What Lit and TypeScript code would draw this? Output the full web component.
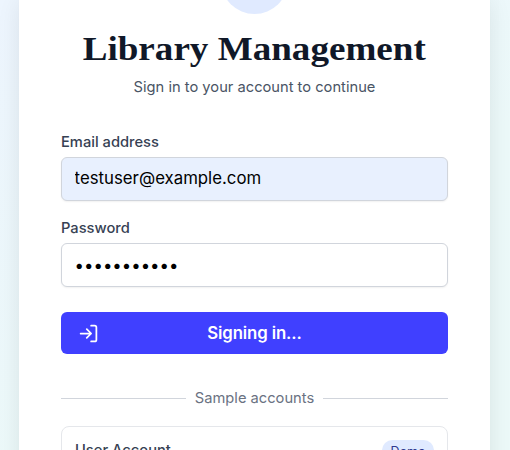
import { LitElement, html, css } from "lit";
import { customElement } from "lit/decorators.js";

@customElement("app-root")
export class AppRoot extends LitElement {
  static styles = css`
    :host {
      display: block;
      height: 450px;
      overflow: hidden;
      font-family: Inter, "Liberation Sans", sans-serif;
      font-size: 14.7px;
      line-height: 21px;
      color: #364153;
      background: linear-gradient(145deg, #edf5fe 0%, #ecf9f9 60%, #ecf9f8 100%);
    }
    * { box-sizing: border-box; }
    .card {
      width: 471px;
      height: 560px;
      margin-left: 19px;
      padding: 0 42px;
      background: #fff;
      box-shadow: 0 0 24px -2px rgba(0, 0, 0, 0.09), 0 -30px 24px -2px rgba(0, 0, 0, 0.02);
    }
    .head { display: flex; flex-direction: column; align-items: center; }
    .logo {
      width: 67px;
      height: 67px;
      margin-top: -53px;
      border-radius: 50%;
      background: #e0eaff;
    }
    h1 {
      margin: 16px 0 0;
      font: bold 34px/38px "Liberation Serif", serif;
      transform: scaleX(1.091);
      white-space: nowrap;
      color: #101828;
    }
    .sub { margin: 9px 0 0; color: #4a5565; }
    .form { display: flex; flex-direction: column; margin-top: 34px; }
    label { height: 21px; font-weight: 500; margin-bottom: 4px; }
    .field {
      display: block;
      width: 100%;
      height: 44px;
      border: 1px solid #d1d5dc;
      border-radius: 6px;
      padding: 0 12.6px;
      margin: 0 0 17px;
      outline: 0;
      background: #fff;
      font-family: inherit;
      font-size: 16.8px;
      color: #000;
      box-shadow: 0 1px 2px rgba(0, 0, 0, 0.06);
    }
    .filled { background: #e8f0fe; padding-bottom: 2px; }
    button {
      display: grid;
      grid-template-columns: 21px 1fr 21px;
      align-items: center;
      height: 42px;
      margin: 8px 0 0;
      padding: 0 17px;
      border: 0;
      border-radius: 6px;
      background: #4040ff;
      color: #fff;
      font: 600 16.8px/25px Inter, sans-serif;
      letter-spacing: -0.12px;
    }
    svg { display: block; }
    .divider {
      display: flex;
      align-items: center;
      gap: 9px;
      margin-top: 34px;
      height: 21px;
      color: #6a7282;
    }
    .line { flex: 1; height: 1px; background: #d1d5dc; }
    .account {
      display: flex;
      justify-content: space-between;
      height: 84px;
      margin-top: 17px;
      padding: 13px;
      border: 1px solid #e5e7eb;
      border-radius: 8px;
      font-weight: 500;
    }
    .badge {
      height: 21px;
      padding: 1px 8.4px 0;
      border-radius: 11px;
      background: #e0eaff;
      color: #2f3a8f;
      font-size: 12.6px;
      font-weight: 400;
    }
  `;

  render() {
    return html`
      <main class="card">
        <header class="head">
          <div class="logo"></div>
          <h1>Library Management</h1>
          <p class="sub">Sign in to your account to continue</p>
        </header>
        <section class="form">
          <label for="email">Email address</label>
          <input id="email" class="field filled" type="text" value="testuser@example.com" />
          <label for="password">Password</label>
          <input id="password" class="field" type="password" value="password123" />
          <button type="button">
            <svg width="21" height="21" viewBox="0 0 24 24" fill="none" stroke="currentColor"
              stroke-width="2" stroke-linecap="round" stroke-linejoin="round">
              <path d="M15 3h4a2 2 0 0 1 2 2v14a2 2 0 0 1-2 2h-4M10 17l5-5-5-5M15 12H3" />
            </svg>
            <span>Signing in...</span>
          </button>
        </section>
        <div class="divider"><span class="line"></span>Sample accounts<span class="line"></span></div>
        <article class="account"><span>User Account</span><span class="badge">Demo</span></article>
      </main>
    `;
  }
}
